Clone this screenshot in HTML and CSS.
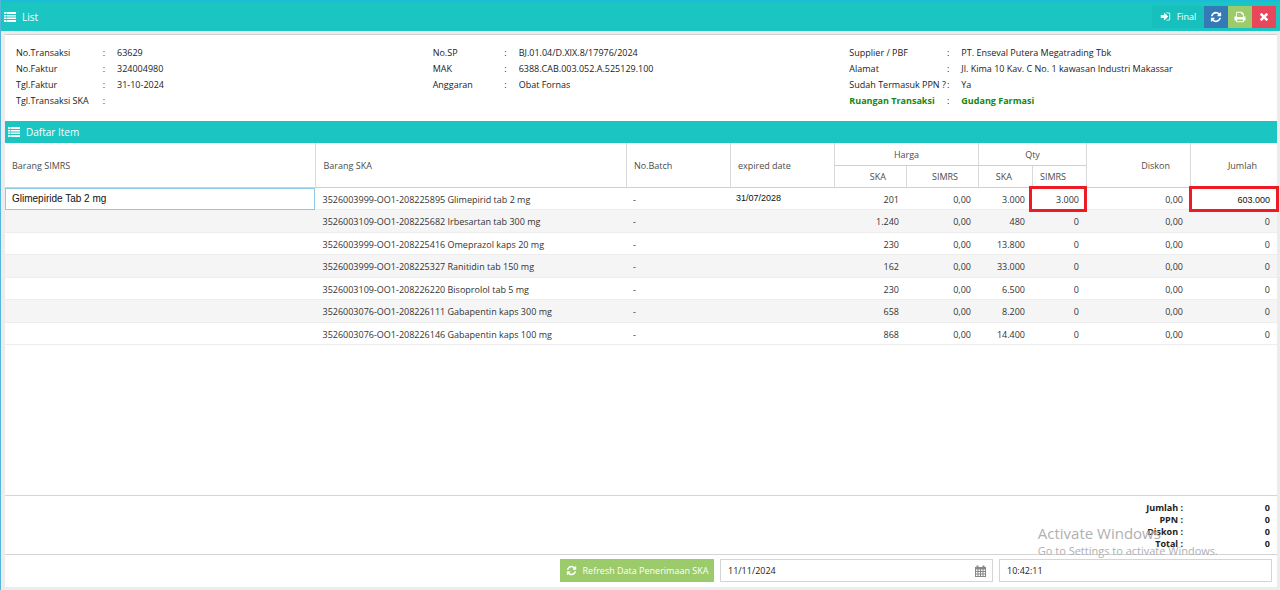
FILE: index.html
```html
<!DOCTYPE html>
<html lang="id">
<head>
<meta charset="utf-8">
<title>List</title>
<link rel="stylesheet" href="styles.css">
</head>
<body>
<svg class="defs" aria-hidden="true">
  <symbol id="i-list" viewBox="0 0 12 10"><path d="M0 0h2v2H0zM2.500 0H12v2H2.500zM0 3h2v1.500H0zM2.500 3H12v1.500H2.500zM0 5.500h2v1.500H0zM2.500 5.500H12v1.500H2.500zM0 8h2v2H0zM2.500 8H12v2H2.500z"/></symbol>
  <symbol id="i-refresh" viewBox="0 0 1792 1792"><path d="M1639 1056q0 5-1 7-64 268-268 434.5t-478 166.5q-146 0-282.5-55t-243.5-157l-129 129q-19 19-45 19t-45-19-19-45v-448q0-26 19-45t45-19h448q26 0 45 19t19 45-19 45l-137 137q71 66 161 102t187 36q134 0 250-65t186-179q11-17 53-117 8-23 30-23h192q13 0 22.5 9.5t9.5 22.5zm25-800v448q0 26-19 45t-45 19h-448q-26 0-45-19t-19-45 19-45l138-138q-148-137-349-137-134 0-250 65t-186 179q-11 17-53 117-8 23-30 23h-199q-13 0-22.5-9.5t-9.5-22.5v-7q65-268 270-434.5t480-166.5q146 0 284 55.5t245 156.5l130-129q19-19 45-19t45 19 19 45z"/></symbol>
  <symbol id="i-times" viewBox="0 0 1792 1792"><path transform="translate(0 -64)" d="M1490 1322q0 40-28 68l-136 136q-28 28-68 28t-68-28l-294-294-294 294q-28 28-68 28t-68-28l-136-136q-28-28-28-68t28-68l294-294-294-294q-28-28-28-68t28-68l136-136q28-28 68-28t68 28l294 294 294-294q28-28 68-28t68 28l136 136q28 28 28 68t-28 68l-294 294 294 294q28 28 28 68z"/></symbol>
  <symbol id="i-print" viewBox="0 0 1792 1792"><path d="M448 1536h896v-256h-896v256zm0-640h896v-384h-160q-40 0-68-28t-28-68v-160h-640v640zm1152 64q0-26-19-45t-45-19-45 19-19 45 19 45 45 19 45-19 19-45zm128 0v416q0 13-9.5 22.5t-22.5 9.5h-224v160q0 40-28 68t-68 28h-960q-40 0-68-28t-28-68v-160h-224q-13 0-22.5-9.5t-9.5-22.5v-416q0-79 56.5-135.5t135.5-56.5h64v-544q0-40 28-68t68-28h672q40 0 88 20t76 48l152 152q28 28 48 76t20 88v256h64q79 0 135.5 56.5t56.5 135.5z"/></symbol>
  <symbol id="i-signin" viewBox="0 0 1792 1792"><path d="M1312 896q0 26-19 45l-544 544q-19 19-45 19t-45-19-19-45v-288h-448q-26 0-45-19t-19-45v-384q0-26 19-45t45-19h448v-288q0-26 19-45t45-19 45 19l544 544q19 19 19 45zm352-352v704q0 119-84.5 203.5t-203.5 84.5h-320q-13 0-22.5-9.5t-9.5-22.5q0-4-1-20t-.5-26.5 3-23.5 10-19.5 20.5-6.5h320q66 0 113-47t47-113v-704q0-66-47-113t-113-47h-312l-11.5-1-11.5-3-8-5.5-7-9-2-13.5q0-4-1-20t-.5-26.5 3-23.5 10-19.5 20.5-6.5h320q119 0 203.5 84.5t84.5 203.5z"/></symbol>
  <symbol id="i-calendar" viewBox="0 0 22 24"><path fill-rule="evenodd" d="M0 4h3V1h4v3h8V1h4v3h3v20H0zM2 9v3h3V9zm5 0v3h3V9zm5 0v3h3V9zm5 0v3h3V9zM2 14v3h3v-3zm5 0v3h3v-3zm5 0v3h3v-3zm5 0v3h3v-3zM2 19v3h3v-3zm5 0v3h3v-3zm5 0v3h3v-3zm5 0v3h3v-3z"/></symbol>
</svg>
<div class="window">
  <header class="titlebar">
    <h1 class="title"><svg class="icon-list"><use href="#i-list"/></svg>List</h1>
    <div class="tools">
      <button class="tool tool-final" type="button"><svg class="icon"><use href="#i-signin"/></svg>Final</button>
      <button class="tool tool-blue" type="button" aria-label="Refresh"><svg class="icon icon-lg"><use href="#i-refresh"/></svg></button>
      <button class="tool tool-green" type="button" aria-label="Print"><svg class="icon icon-lg"><use href="#i-print"/></svg></button>
      <button class="tool tool-red" type="button" aria-label="Close"><svg class="icon icon-lg"><use href="#i-times"/></svg></button>
    </div>
  </header>
  <main class="content">
    <section class="info">
      <dl class="fields">
        <dt>No.Transaksi<span>:</span></dt><dd>63629</dd>
        <dt>No.Faktur<span>:</span></dt><dd>324004980</dd>
        <dt>Tgl.Faktur<span>:</span></dt><dd>31-10-2024</dd>
        <dt>Tgl.Transaksi SKA<span>:</span></dt><dd></dd>
      </dl>
      <dl class="fields fields-sp">
        <dt>No.SP<span>:</span></dt><dd>BJ.01.04/D.XIX.8/17976/2024</dd>
        <dt>MAK<span>:</span></dt><dd>6388.CAB.003.052.A.525129.100</dd>
        <dt>Anggaran<span>:</span></dt><dd>Obat Fornas</dd>
      </dl>
      <dl class="fields fields-supplier">
        <dt>Supplier / PBF<span>:</span></dt><dd>PT. Enseval Putera Megatrading Tbk</dd>
        <dt>Alamat<span>:</span></dt><dd>Jl. Kima 10 Kav. C No. 1 kawasan Industri Makassar</dd>
        <dt>Sudah Termasuk PPN ?<span>:</span></dt><dd>Ya</dd>
        <dt class="room">Ruangan Transaksi<span>:</span></dt><dd class="room">Gudang Farmasi</dd>
      </dl>
    </section>
    <h2 class="section-title"><svg class="icon-list"><use href="#i-list"/></svg>Daftar Item</h2>
    <div class="grid-area">
      <table class="items">
        <colgroup><col><col><col class="c-batch"><col class="c-batch"><col class="c-price"><col class="c-price"><col class="c-qty"><col class="c-qty"><col class="c-batch"><col class="c-total"></colgroup>
        <thead>
          <tr><th rowspan="2">Barang SIMRS</th><th rowspan="2">Barang SKA</th><th rowspan="2">No.Batch</th><th rowspan="2">expired date</th><th class="group" colspan="2">Harga</th><th class="group" colspan="2">Qty</th><th class="num" rowspan="2">Diskon</th><th class="num" rowspan="2">Jumlah</th></tr>
          <tr><th class="num">SKA</th><th class="num">SIMRS</th><th class="num">SKA</th><th class="num">SIMRS</th></tr>
        </thead>
        <tbody>
          <tr><td class="editing">Glimepiride Tab 2 mg</td><td>3526003999-OO1-208225895 Glimepirid tab 2 mg</td><td>-</td><td class="typed">31/07/2028</td><td class="num">201</td><td class="num">0,00</td><td class="num">3.000</td><td class="num marked">3.000</td><td class="num">0,00</td><td class="num marked sum">603.000</td></tr>
          <tr><td></td><td>3526003109-OO1-208225682 Irbesartan tab 300 mg</td><td>-</td><td></td><td class="num">1.240</td><td class="num">0,00</td><td class="num">480</td><td class="num">0</td><td class="num">0,00</td><td class="num">0</td></tr>
          <tr><td></td><td>3526003999-OO1-208225416 Omeprazol kaps 20 mg</td><td>-</td><td></td><td class="num">230</td><td class="num">0,00</td><td class="num">13.800</td><td class="num">0</td><td class="num">0,00</td><td class="num">0</td></tr>
          <tr><td></td><td>3526003999-OO1-208225327 Ranitidin tab 150 mg</td><td>-</td><td></td><td class="num">162</td><td class="num">0,00</td><td class="num">33.000</td><td class="num">0</td><td class="num">0,00</td><td class="num">0</td></tr>
          <tr><td></td><td>3526003109-OO1-208226220 Bisoprolol tab 5 mg</td><td>-</td><td></td><td class="num">230</td><td class="num">0,00</td><td class="num">6.500</td><td class="num">0</td><td class="num">0,00</td><td class="num">0</td></tr>
          <tr><td></td><td>3526003076-OO1-208226111 Gabapentin kaps 300 mg</td><td>-</td><td></td><td class="num">658</td><td class="num">0,00</td><td class="num">8.200</td><td class="num">0</td><td class="num">0,00</td><td class="num">0</td></tr>
          <tr><td></td><td>3526003076-OO1-208226146 Gabapentin kaps 100 mg</td><td>-</td><td></td><td class="num">868</td><td class="num">0,00</td><td class="num">14.400</td><td class="num">0</td><td class="num">0,00</td><td class="num">0</td></tr>
        </tbody>
      </table>
    </div>
    <dl class="summary">
      <dt>Jumlah :</dt><dd>0</dd>
      <dt>PPN :</dt><dd>0</dd>
      <dt>Diskon :</dt><dd>0</dd>
      <dt>Total :</dt><dd>0</dd>
    </dl>
    <footer class="toolbar">
      <button class="refresh" type="button"><svg class="icon"><use href="#i-refresh"/></svg>Refresh Data Penerimaan SKA</button>
      <div class="box"><input type="text" aria-label="Tanggal" value="11/11/2024"><svg class="icon-cal"><use href="#i-calendar"/></svg></div>
      <div class="box"><input type="text" aria-label="Jam" value="10:42:11"></div>
    </footer>
  </main>
  <div class="watermark"><p class="wm-title">Activate Windows</p><p class="wm-text">Go to Settings to activate Windows.</p></div>
</div>
</body>
</html>
```
FILE: styles.css
```css
* { box-sizing: border-box; }
body {
  margin: 0;
  font: 400 9px/16px "Open Sans", "Noto Sans", sans-serif;
  color: #222;
  background: #ececec;
}
h1, h2, dl, dd, p { margin: 0; }
button, input { font: inherit; color: inherit; }
svg { fill: currentColor; flex: none; }
.defs { position: absolute; width: 0; height: 0; }

.window {
  position: relative;
  display: flex;
  flex-direction: column;
  min-height: 100vh;
  border-left: 1px solid #55b5dc;
}
.titlebar {
  display: flex;
  align-items: center;
  justify-content: space-between;
  height: 31px;
  padding: 0 4px 0 3px;
  border-top: 2px solid #1cbbd9;
  background: #1bc6c2;
  color: #fff;
}
.title, .section-title {
  display: flex;
  align-items: center;
  gap: 6px;
  font-size: 10px;
  font-weight: 500;
}
.icon-list { width: 12px; height: 10px; }
.icon { width: 11px; height: 11px; }
.icon-lg { width: 12px; height: 12px; }
.tools { display: flex; }
.tool {
  display: flex;
  align-items: center;
  justify-content: center;
  gap: 6px;
  width: 24px;
  height: 22px;
  padding: 0;
  border: 0;
  color: #fff;
}
.tool-final { width: 52px; background: #18c0bd; }
.tool-blue { background: #337ab7; }
.tool-green { background: #9bcb6b; }
.tool-red { background: #e8465a; }

.content {
  flex: 1;
  display: flex;
  flex-direction: column;
  margin: 3px 3px 3px 4px;
  background: #fff;
}
.info {
  display: grid;
  grid-template-columns: repeat(3, 1fr);
  height: 87px;
  padding: 10px 11px;
  border-top: 1px solid #d0d0d0;
}
.fields {
  display: grid;
  grid-template-columns: 101px 1fr;
  grid-auto-rows: 16px;
}
.fields-sp { grid-template-columns: 86px 1fr; }
.fields-supplier { grid-template-columns: 112px 1fr; }
.fields dt {
  display: flex;
  justify-content: space-between;
  padding-right: 12px;
  white-space: nowrap;
}
.fields .room { color: #118811; font-weight: 700; }
.room span { color: #222; font-weight: 400; }
.section-title {
  height: 22px;
  padding-left: 3px;
  background: #1bc6c2;
  color: #fff;
}

.grid-area { flex: 1; }
.items {
  width: 100%;
  table-layout: fixed;
  border-collapse: separate;
  border-spacing: 0;
}
.c-batch { width: 104px; }
.c-price { width: 72px; }
.c-qty { width: 54px; }
.c-total { width: 87px; }
.items th, .items td { text-align: left; white-space: nowrap; line-height: 14px; }
.items th {
  height: 22px;
  padding: 1px 7px 0;
  border-left: 1px solid #d9d9d9;
  border-bottom: 1px solid #d0d0d0;
  color: #4c4c4c;
  font-weight: 400;
}
.items th:first-child[rowspan] { border-left: 0; }
.items th.group { height: 23px; text-align: center; }
.items th.num { padding-right: 20px; text-align: right; }
.items td { height: 22px; padding: 2px 7px 0; border-bottom: 1px solid #ededed; color: #333; font-weight: 500; }
.items tr:nth-child(even) td { height: 23px; background: #f5f5f5; }
.items td.num { text-align: right; }
.items td.editing, .items td.typed {
  padding: 0 6px 1px;
  color: #111;
  font: 400 10px/14px "Liberation Sans", Arial, sans-serif;
}
.items td.editing { border: 1px solid #8ccbe6; }
.items td.typed { font-size: 9px; }
.marked { position: relative; }
.marked::after {
  content: "";
  position: absolute;
  inset: -2px -1px -3px -3px;
  border: 3px solid #ed1c24;
}
.items td.sum { color: #111; font: 400 9px/14px "Liberation Sans", Arial, sans-serif; }
.sum::after { inset: -2px -2px -3px -1px; }

.summary {
  display: grid;
  grid-template-columns: 1fr 87px;
  grid-auto-rows: 12px;
  height: 59px;
  padding: 6px 7px 4px 0;
  border-top: 1px solid #d5d5d5;
  font-weight: 700;
  line-height: 12px;
  text-align: right;
}
.toolbar {
  display: flex;
  justify-content: flex-end;
  gap: 6px;
  padding: 4px 5px 5px;
  border-top: 1px solid #d5d5d5;
}
.refresh {
  display: flex;
  align-items: center;
  justify-content: center;
  gap: 6px;
  width: 154px;
  height: 23px;
  padding: 0;
  border: 0;
  background: #9bcb6b;
  color: #fff;
}
.box {
  display: flex;
  align-items: center;
  width: 273px;
  height: 23px;
  padding: 1px 6px 0 7px;
  border: 1px solid #d5d5d5;
  font-weight: 500;
}
.box input { flex: 1; min-width: 0; padding: 0; border: 0; outline: 0; background: none; }
.icon-cal { width: 11px; height: 12px; color: #888; }

.watermark {
  position: absolute;
  right: 62px;
  bottom: 31px;
  color: #b0b0b0;
  pointer-events: none;
}
.wm-title { font-size: 15px; line-height: 19px; }
.wm-text { font-size: 11px; line-height: 16px; }
```
